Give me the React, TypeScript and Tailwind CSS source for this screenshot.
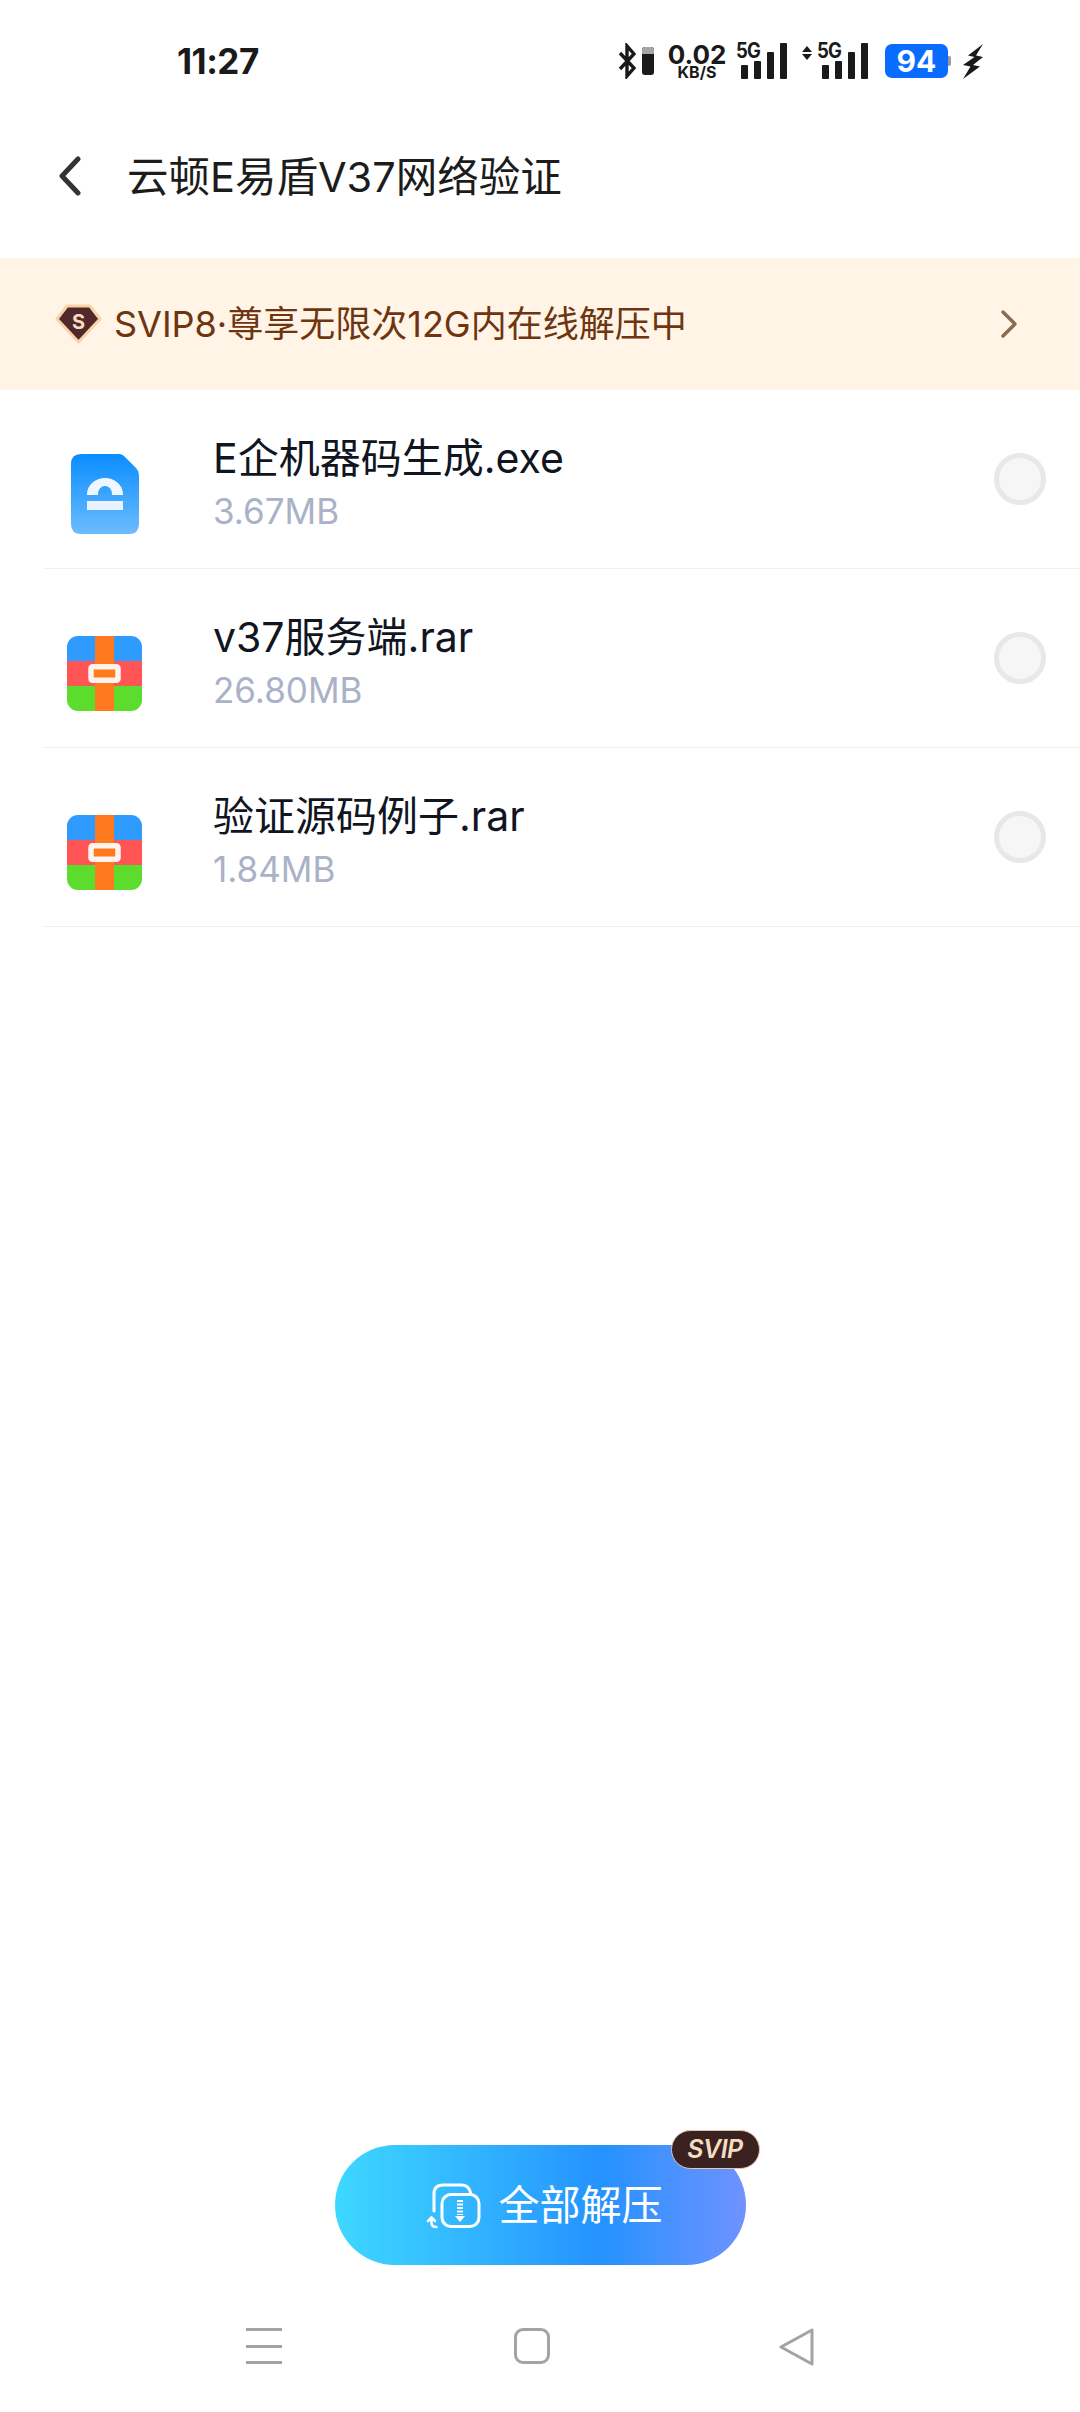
const FONT = "font-['Inter','Noto_Sans_CJK_SC',sans-serif]";

const Signal = () => (
  <div className="relative flex h-[36px] w-[51px] items-end justify-end gap-[6px]">
    <span className="absolute left-0 top-[-3px] origin-left scale-x-[0.88] text-[21px] font-bold leading-[21px] tracking-[-1px]">5G</span>
    <div className="h-[14px] w-[7px] rounded-[1px] bg-[#1a1a1a]" />
    <div className="h-[18px] w-[7px] rounded-[1px] bg-[#1a1a1a]" />
    <div className="h-[27px] w-[7px] rounded-[1px] bg-[#1a1a1a]" />
    <div className="h-[36px] w-[7px] rounded-[1px] bg-[#1a1a1a]" />
  </div>
);

const StatusBar = () => (
  <div className="flex h-[120px] items-center pl-[177px] pr-[96px] pt-[2px]">
    <span className="text-[35px] font-bold leading-none tracking-[-0.5px] text-[#1a1a1a]">11:27</span>
    <div className="ml-auto flex items-center text-[#1a1a1a]">
      <svg width="18" height="36" viewBox="0 0 18 36" fill="none" stroke="#1a1a1a" strokeWidth="3.4" className="mr-[6px]">
        <path d="M2 10 16 25 9 33V3l7 8L2 26" />
      </svg>
      <div className="mr-[14px] h-[28px] w-[12px] overflow-hidden rounded-[3px] bg-[#1a1a1a]">
        <div className="h-[7px] bg-[#a6a6a6]" />
      </div>
      <div className="mr-[10px] flex w-[58px] flex-col items-center">
        <span className="text-[26px] font-bold leading-[21px]">0.02</span>
        <span className="text-[16px] font-bold leading-[14px]">KB/S</span>
      </div>
      <Signal />
      <div className="ml-[15px] mr-[5px] flex w-[10px] flex-col items-center gap-[2px] self-start pt-[3px]">
        <div className="h-0 w-0 border-x-[5px] border-b-[6px] border-x-transparent border-b-[#1a1a1a]" />
        <div className="h-0 w-0 border-x-[5px] border-t-[6px] border-x-transparent border-t-[#1a1a1a]" />
      </div>
      <Signal />
      <div className="ml-[17px] flex h-[34px] w-[63px] items-center justify-center rounded-[7px] bg-[#0a6cff] text-[30px] font-bold text-white">
        94
      </div>
      <div className="h-[10px] w-[3px] rounded-r-[2px] bg-[#9a9a9a]" />
      <svg width="22" height="36" viewBox="0 0 22 36" fill="#1a1a1a" className="ml-[11px]">
        <path d="M21 1 6 12.500l6.500 1.500L1 22l7.500 1.500L1 36 18 23.500l-7-1.500 10-8-7-1.500z" />
      </svg>
    </div>
  </div>
);

const ExeIcon = () => (
  <svg width="68" height="80" viewBox="0 0 68 80">
    <defs>
      <linearGradient id="exe" x1="0" y1="0" x2="0" y2="1">
        <stop offset="0" stopColor="#0a8dff" />
        <stop offset="1" stopColor="#6cbcff" />
      </linearGradient>
    </defs>
    <path d="M10 0h38q3 0 5 2l12 12q3 3 3 7v49q0 10-10 10H10Q0 80 0 70V10Q0 0 10 0z" fill="url(#exe)" />
    <path d="M16 41v-1a18 16 0 0 1 36 0v1H41v-1a7 8 0 0 0-14 0v1z" fill="#eef6ff" />
    <rect x="16" y="47" width="36" height="9" fill="#e8f3ff" />
  </svg>
);

const RarIcon = () => (
  <svg width="75" height="75" viewBox="0 0 75 75">
    <defs>
      <clipPath id="rar-clip">
        <rect width="75" height="75" rx="11" />
      </clipPath>
    </defs>
    <g clipPath="url(#rar-clip)">
      <rect width="75" height="25" fill="#2f9bff" />
      <rect y="25" width="75" height="25" fill="#ff5555" />
      <rect y="50" width="75" height="25" fill="#5cdd2e" />
      <rect x="28" width="19" height="75" fill="#ff7a1f" />
    </g>
    <rect x="24" y="30.750" width="27" height="13.500" rx="1.500" fill="#ff7a1f" stroke="#fff3ee" strokeWidth="5.500" />
  </svg>
);

const files = [
  { name: 'E企机器码生成.exe', size: '3.67MB', icon: <ExeIcon /> },
  { name: 'v37服务端.rar', size: '26.80MB', icon: <RarIcon /> },
  { name: '验证源码例子.rar', size: '1.84MB', icon: <RarIcon /> },
];

const App = () => {
  return (
    <div className={`${FONT} flex h-[2412px] w-[1080px] flex-col overflow-hidden bg-white`}>
      <StatusBar />

      <div className="flex h-[138px] items-start pl-[58px] pt-[36px]">
        <svg width="24" height="40" viewBox="0 0 24 40" fill="none" stroke="#333333" strokeWidth="5" strokeLinecap="round" strokeLinejoin="round">
          <path d="M20 3 4 20l16 17" />
        </svg>
        <span className="ml-[45px] text-[41.500px] leading-[42px] text-[#1c1c1c]">云顿E易盾V37网络验证</span>
      </div>

      <div className="flex h-[132px] items-center bg-[#fff4e6] pl-[55px] pr-[62px]">
        <div className="relative h-[42px] w-[47px] shrink-0">
          <svg width="47" height="42" viewBox="0 0 47 42">
            <path d="M12 3h23l10 13-21.500 23L2 16z" fill="#51292a" stroke="#fbd3a8" strokeWidth="3" strokeLinejoin="round" />
          </svg>
          <span className="absolute inset-0 flex items-center justify-center pb-[5px] text-[20px] font-bold leading-none text-[#f6dcc4]">S</span>
        </div>
        <span className="ml-[12px] text-[36px] leading-none text-[#6e3510]">SVIP8·尊享无限次12G内在线解压中</span>
        <svg width="18" height="30" viewBox="0 0 18 30" fill="none" stroke="#8a6a52" strokeWidth="3.5" strokeLinecap="round" strokeLinejoin="round" className="ml-auto">
          <path d="M3 3l12 12L3 27" />
        </svg>
      </div>

      {files.map((file) => (
        <div key={file.name} className="ml-[43px] flex h-[179px] items-center border-b border-[#f0f0f0] pb-[2px]">
          <div className="flex w-[170px] shrink-0 pl-[24px] pt-[32px]">
            <div className="flex w-[75px] justify-center">{file.icon}</div>
          </div>
          <div className="flex flex-col self-start pt-[43px]">
            <span className="text-[41px] leading-[50px] text-[#10151f]">{file.name}</span>
            <span className="mt-[8px] text-[35px] leading-[40px] text-[#a9b2c6]">{file.size}</span>
          </div>
          <div className="ml-auto mr-[34px] mt-[2px] h-[52px] w-[52px] rounded-full border-[5px] border-[#e8e8e8] bg-[#f6f6f6]" />
        </div>
      ))}

      <div className="mt-auto flex justify-center">
        <div className="relative flex h-[120px] w-[411px] items-center justify-center rounded-full bg-[linear-gradient(90deg,#3ed8ff_0%,#2592ff_65%,#6f92ff_100%)] pl-[7px] text-white">
          <svg width="60" height="60" viewBox="0 0 60 60" fill="none" stroke="#ffffff" strokeWidth="3" strokeLinecap="round">
            <path d="M9 36V19q0-9 9-9h19q7 0 9 9" />
            <rect x="17" y="19.500" width="37" height="32" rx="9" />
            <path d="M35 25v15" strokeDasharray="2 1.500" strokeWidth="6" strokeLinecap="butt" />
            <path d="M30 41h10l-5 6z" fill="#ffffff" stroke="none" />
            <path d="M3 46l3.500-3.500L10 46M6.500 43v5q0 4 5 4" strokeWidth="2.500" />
          </svg>
          <span className="ml-[14px] text-[41px] leading-none">全部解压</span>
          <div className="absolute right-[-14px] top-[-15px] flex h-[39px] w-[89px] items-center justify-center rounded-full border border-[#e7c6ae] bg-[#3a2220]">
            <span className="text-[25px] font-semibold italic leading-none tracking-[-0.5px] text-[#f3dcc0]">SVIP</span>
          </div>
        </div>
      </div>

      <div className="flex h-[147px] items-start pl-[246px] pt-[63px]">
        <div className="flex h-[36px] w-[36px] flex-col justify-between">
          <div className="h-[3px] bg-[#a3a3a3]" />
          <div className="h-[3px] bg-[#a3a3a3]" />
          <div className="h-[3px] bg-[#a3a3a3]" />
        </div>
        <div className="ml-[232px] h-[36px] w-[36px] rounded-[9px] border-[3px] border-[#a3a3a3]" />
        <svg width="36" height="38" viewBox="0 0 36 38" fill="none" stroke="#a3a3a3" strokeWidth="3" strokeLinejoin="round" className="ml-[229px]">
          <path d="M2 19 33 2v34z" />
        </svg>
      </div>
    </div>
  );
};

export default App;
